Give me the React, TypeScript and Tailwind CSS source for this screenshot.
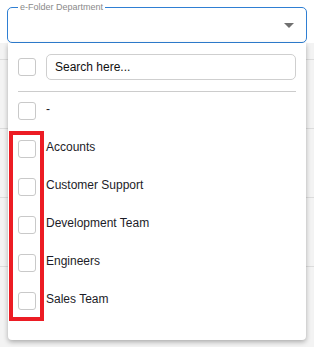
import React from "react";

const items = ["-", "Accounts", "Customer Support", "Development Team", "Engineers", "Sales Team"];

function Box() {
  return <div className="w-[18px] h-[18px] shrink-0 rounded-[3px] border border-[#c9c9c9] bg-white" />;
}

export default function App() {
  return (
    <div
      className="relative w-[314px] h-[347px] overflow-hidden bg-white"
      style={{ fontFamily: '"Liberation Sans", Arial, sans-serif' }}
    >
      {/* field */}
      <div className="pt-[7px] px-[7px] bg-white">
        <div className="relative h-[36px] rounded-[5px] border border-[#2f7fd3] bg-white flex items-center justify-end pr-[12px]">
          <span className="absolute -top-[7px] left-[10px] bg-white px-[2px] text-[9px] leading-[12px] text-[#8a8a8a]">
            e-Folder Department
          </span>
          <svg className="mt-[1px]" width="10" height="5" viewBox="0 0 10 5">
            <polygon points="0,0 10,0 5,5" fill="#707070" />
          </svg>
        </div>
      </div>

      {/* background content */}
      <div className="bg-[#f3f3f3] h-[304px] flex flex-col">
        <div className="h-[16px]" />
        <div className="h-[69px] border-t border-[#dcdcdc]" />
        <div className="h-[69px] border-t border-[#dcdcdc]" />
        <div className="h-[69px] border-t border-[#dcdcdc]" />
        <div className="h-[69px] border-t border-[#dcdcdc]" />
      </div>

      {/* dropdown panel */}
      <div className="absolute left-[8px] top-[43px] w-[298px] h-[297px] bg-white rounded-b-[4px] shadow-[0_2px_5px_rgba(0,0,0,0.3)] px-[10px] pt-[11px] flex flex-col">
        <div className="flex items-center gap-[10px]">
          <Box />
          <div className="flex-1 h-[26px] rounded-[5px] border border-[#cfcfcf] flex items-center pl-[8px] text-[12px] text-[#111]">
            Search here...
          </div>
        </div>
        <div className="mt-[11px] h-px bg-[#cccccc]" />
        {items.map((t) => (
          <div key={t} className="h-[38px] flex items-center gap-[10px]">
            <Box />
            <span className="pb-[4px] text-[12px] text-[#1c1c28]">{t}</span>
          </div>
        ))}
      </div>

      {/* annotation */}
      <div className="absolute left-[9px] top-[131px] w-[35px] h-[190px] border-[4px] border-[#ec1c24]" />
    </div>
  );
}
